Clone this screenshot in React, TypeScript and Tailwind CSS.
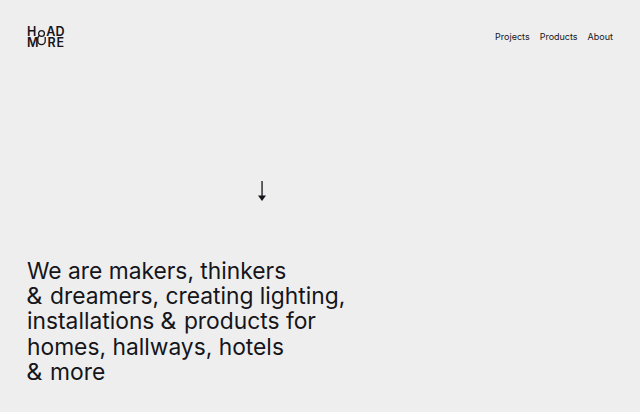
const font = "font-['Inter','Lato',sans-serif]";

function Amp() {
  return <span className="mr-[2px] inline-block scale-x-110">&amp;</span>;
}

function Logo() {
  return (
    <div className="relative flex w-[37px] flex-col text-[12.5px] leading-[10.5px] font-semibold text-[#15151a]">
      <span className="flex justify-between">
        <span>H</span>
        <span className="ml-[10px]">A</span>
        <span>D</span>
      </span>
      <span className="flex justify-between">
        <span>M</span>
        <span className="ml-[8px]">R</span>
        <span>E</span>
      </span>
      <svg className="absolute top-[2px] left-[9.5px]" width="9" height="17" viewBox="0 0 9 17" fill="none" stroke="#15151a" strokeWidth="1.3">
        <circle cx="4.5" cy="4.5" r="2.9" />
        <path d="M2.2 6.5 C1 7.5 0.8 8.5 0.8 10 V12 A3.7 3.7 0 0 0 8.2 12 V8" />
      </svg>
    </div>
  );
}

export default function App() {
  return (
    <div className={`flex h-[412px] w-[640px] flex-col overflow-hidden bg-[#eeeeef] px-[27px] text-[#15151a] ${font}`}>
      <header className="flex items-start justify-between pt-[27px]">
        <Logo />
        <nav className="flex gap-[10px] pt-[3px] text-[9px] leading-[14px]">
          <a>Projects</a>
          <a>Products</a>
          <a>About</a>
        </nav>
      </header>
      <div className="flex pt-[133px] pl-[230px]">
        <svg width="10" height="21" viewBox="0 0 10 21" fill="#15151a">
          <rect x="4.4" y="0" width="1.3" height="17" />
          <path d="M1 14.5 H9 L5 20 Z" />
        </svg>
      </div>
      <p className="mt-[56px] text-[22.8px] leading-[25.2px] whitespace-nowrap">
        <span className="block">We are makers, thinkers</span>
        <span className="block"><Amp /> dreamers, creating lighting,</span>
        <span className="block">installations <Amp /> products for</span>
        <span className="block">homes, hallways, hotels</span>
        <span className="block"><Amp /> more</span>
      </p>
    </div>
  );
}
